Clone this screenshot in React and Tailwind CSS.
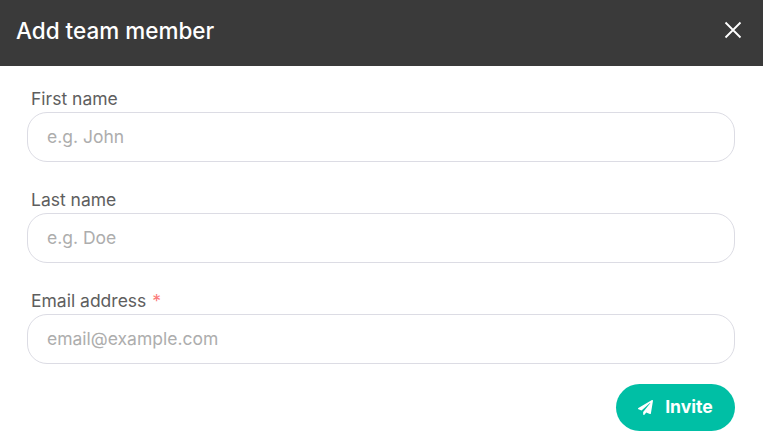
import { FaPaperPlane } from "react-icons/fa";

const fields = [
  { label: "First name", placeholder: "e.g. John" },
  { label: "Last name", placeholder: "e.g. Doe" },
  { label: "Email address", placeholder: "email@example.com", required: true },
];

const App = () => {
  return (
    <div className="w-[763px] h-[448px] bg-white overflow-hidden font-['Inter',sans-serif]">
      {/* Header */}
      <div className="h-[66px] bg-[#3a3a3a] flex items-center justify-between pl-4 pr-[21px] pb-[4px]">
        <h2 className="text-[22.5px] font-medium text-white">Add team member</h2>
        <svg width="18" height="18" viewBox="0 0 18 18" fill="none" stroke="#fff" strokeWidth="1.8" className="mb-[2px]">
          <path d="M1.5 1.5 16.5 16.5M16.5 1.5 1.5 16.5" />
        </svg>
      </div>

      {/* Form */}
      <div className="pl-[27px] pr-[28px] pt-[21px]">
        <div className="flex flex-col gap-[26px]">
          {fields.map((f) => (
            <div key={f.label}>
              <label className="block pl-1 text-[17.5px] leading-[23px] h-[25px] text-[#5e5e5e]">
                {f.label}
                {f.required && <span className="ml-[6px] text-[#fb7a7a]">*</span>}
              </label>
              <input
                placeholder={f.placeholder}
                className="block w-full h-[50px] rounded-[20px] border border-[#dcdce4] pl-[19px] pr-[19px] pb-[2px] text-[17.5px] text-[#595959] placeholder:text-[#adadad] outline-none"
              />
            </div>
          ))}
        </div>
        <div className="flex justify-end mt-5">
          <button className="w-[119px] h-[47px] rounded-full bg-[#00bfa5] text-white flex items-center justify-center gap-[12px] text-[17.6px] font-bold">
            <FaPaperPlane className="w-[15px] h-[15px]" />
            Invite
          </button>
        </div>
      </div>
    </div>
  );
};

export default App;
